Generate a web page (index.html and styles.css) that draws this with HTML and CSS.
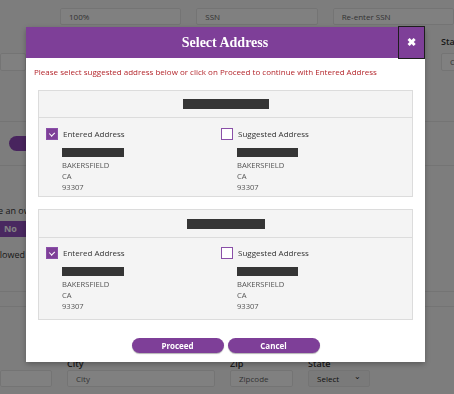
FILE: index.html
```html
<!DOCTYPE html>
<html lang="en">
<head>
<meta charset="utf-8"/>
<meta content="width=device-width, initial-scale=1.0" name="viewport"/>
<title>Owner Information</title>
<link rel="stylesheet" href="styles.css">
</head>
<body>
<div class="page">
    <div class="row top-row">
        <div class="field w140"><label>Ownership</label><div class="input">100%</div></div>
        <div class="field w140"><label>SSN</label><div class="input">SSN</div></div>
        <div class="field w140"><label>Re-enter SSN</label><div class="input">Re-enter SSN</div></div>
    </div>
    <div class="row second-row">
        <div class="field w26"><label>&nbsp;</label><div class="input tall"></div></div>
        <div class="field w60"><label>State</label><div class="input tall">CA</div></div>
    </div>
    <div class="rule rule-a"></div>
    <div class="verify-row">
        <span class="verify-btn">Verify Address</span>
    </div>
    <div class="rule rule-c"></div>
    <p class="question">Do you have an owner</p>
    <div class="toggle"><span class="toggle-no">No</span></div>
    <p class="question q2">Are you allowed to</p>
    <div class="rule rule-b"></div>
    <div class="rule"></div>

    <div class="row bottom-row">
        <div class="field w52"><label>&nbsp;</label><div class="input"></div></div>
        <div class="field w148"><label>City</label><div class="input">City</div></div>
        <div class="field w63"><label>Zip</label><div class="input">Zipcode</div></div>
        <div class="field w62"><label>State</label><div class="input select">Select <span class="chev">&#8964;</span></div></div>
    </div>
</div>

<!-- Address verification modal -->
<div class="backdrop">
    <div class="modal">
        <div class="modal-header">
            <h2>Select Address</h2>
            <button class="close-btn">&#10006;</button>
        </div>
        <div class="modal-body">
            <p class="notice">Please select suggested address below or click on Proceed to continue with Entered Address</p>

            <div class="panel">
                <div class="panel-head"><span class="redact w86"></span></div>
                <div class="panel-body">
                    <div class="choice">
                        <div class="choice-label"><span class="check checked"></span>Entered Address</div>
                        <div class="address">
                            <span class="redact w62"></span>
                            <div>BAKERSFIELD</div>
                            <div>CA</div>
                            <div>93307</div>
                        </div>
                    </div>
                    <div class="choice">
                        <div class="choice-label"><span class="check"></span>Suggested Address</div>
                        <div class="address">
                            <span class="redact w61"></span>
                            <div>BAKERSFIELD</div>
                            <div>CA</div>
                            <div>93307</div>
                        </div>
                    </div>
                </div>
            </div>

            <div class="panel second">
                <div class="panel-head"><span class="redact w78"></span></div>
                <div class="panel-body">
                    <div class="choice">
                        <div class="choice-label"><span class="check checked"></span>Entered Address</div>
                        <div class="address">
                            <span class="redact w62"></span>
                            <div>BAKERSFIELD</div>
                            <div>CA</div>
                            <div>93307</div>
                        </div>
                    </div>
                    <div class="choice">
                        <div class="choice-label"><span class="check"></span>Suggested Address</div>
                        <div class="address">
                            <span class="redact w61"></span>
                            <div>BAKERSFIELD</div>
                            <div>CA</div>
                            <div>93307</div>
                        </div>
                    </div>
                </div>
            </div>

            <div class="actions">
                <button class="pill">Proceed</button>
                <button class="pill">Cancel</button>
            </div>
        </div>
    </div>
</div>
</body>
</html>
```

FILE: styles.css
```css
html, body {
    margin: 0;
    height: 100%;
    overflow: hidden;
}
body {
    font-family: "Open Sans", sans-serif;
    background: #f6f6f6;
    color: #333;
}

/* Page behind the modal */
.page {
    height: 100%;
    display: flex;
    flex-direction: column;
}
.row {
    display: flex;
    gap: 15px;
}
.top-row {
    margin-top: -11px;
    padding-left: 60px;
}
.second-row {
    margin-top: 11px;
    justify-content: space-between;
    margin-right: -47px;
}
.field label {
    display: block;
    height: 11px;
    margin-bottom: 6px;
    font-size: 9px;
    font-weight: 600;
    line-height: 11px;
    white-space: nowrap;
    overflow: hidden;
}
.top-row .field label {
    margin-bottom: 8px;
}
.input {
    height: 15px;
    border: 1px solid #e4e4e4;
    background: #fcfcfc;
    border-radius: 2px;
    font-size: 8px;
    line-height: 15px;
    padding: 0 8px;
    color: #666;
    white-space: nowrap;
}
.input.tall {
    height: 16px;
    line-height: 16px;
}
.select {
    display: flex;
    justify-content: space-between;
    color: #222;
    background: #f0f0f0;
}
.chev {
    font-size: 8px;
    line-height: 10px;
}
.w26 { width: 26px; }
.w52 { width: 52px; }
.w60 { width: 60px; }
.w62 { width: 62px; }
.w63 { width: 63px; }
.w140 { width: 140px; }
.w148 { width: 148px; }
.w26 .input, .w52 .input { padding: 0; }

.rule {
    border-top: 1px solid #e4e4e4;
    margin-top: 14px;
}
.rule-a { margin-top: 50px; }
.verify-row {
    margin-top: 14px;
    padding-left: 9px;
}
.verify-btn {
    display: block;
    width: 120px;
    height: 15px;
    border-radius: 8px;
    background: #8e48b8;
    color: #fff;
    font-size: 8px;
    line-height: 15px;
    text-align: center;
}
.rule-c { margin-top: 14px; }
.question {
    margin: 39px 0 0 -49px;
    font-size: 9px;
    line-height: 12px;
    white-space: nowrap;
}
.q2 {
    margin: 12px 0 0 -42px;
}
.toggle {
    margin-top: 4px;
    width: 60px;
    height: 16px;
    background: #8f4fbd;
}
.toggle-no {
    display: block;
    padding-left: 4px;
    color: #fff;
    font-size: 9px;
    font-weight: 700;
    line-height: 16px;
}
.rule-b { margin-top: 30px; }
.bottom-row {
    margin-top: auto;
    padding-bottom: 7px;
}
.bottom-row .field label {
    height: 12px;
    margin-bottom: 0;
}

/* Modal */
.backdrop {
    position: fixed;
    inset: 0;
    background: rgba(0, 0, 0, 0.49);
    display: flex;
    justify-content: center;
    align-items: flex-start;
    padding-top: 27px;
    padding-right: 3px;
}
.modal {
    width: 399px;
    background: #fff;
    box-shadow: 0 2px 6px rgba(0, 0, 0, 0.3);
}
.modal-header {
    height: 31px;
    background: #7e3f98;
    display: flex;
    align-items: flex-start;
}
.modal-header h2 {
    flex: 1;
    margin: 0;
    padding-left: 26px;
    text-align: center;
    font-family: "Liberation Serif", serif;
    font-size: 14px;
    font-weight: 700;
    line-height: 31px;
    color: #fff;
}
.close-btn {
    width: 27px;
    height: 33px;
    margin-top: -1px;
    border: 1px solid #1e1e1e;
    background: #7e3f98;
    color: #fff;
    font-size: 11px;
    font-weight: 700;
    padding: 0;
    line-height: 31px;
}
.modal-body {
    padding: 0 12px 9px;
}
.notice {
    margin: 0 0 0 -4px;
    padding-top: 8px;
    font-size: 8px;
    line-height: 12px;
    color: #b4262c;
    white-space: nowrap;
}
.panel {
    margin-top: 12px;
    background: #f4f4f4;
    border: 1px solid #dcdcdc;
}
.panel-head {
    height: 26px;
    border-bottom: 1px solid #dcdcdc;
    display: flex;
    justify-content: center;
    align-items: center;
}
.second .panel-head {
    height: 27px;
}
.redact {
    display: block;
    height: 10px;
    background: #353535;
}
.w86 { width: 86px; }
.w78 { width: 78px; }
.w61 { width: 61px; }
.panel-body {
    display: grid;
    grid-template-columns: 175px 1fr;
    padding: 10px 7px 3px;
}
.second .panel-body {
    padding: 9px 7px 7px;
}
.choice-label {
    display: flex;
    align-items: center;
    gap: 5px;
    font-size: 8px;
    line-height: 12px;
    color: #333;
}
.check {
    width: 10px;
    height: 10px;
    border: 1px solid #8a4fa8;
    background: #fff;
    position: relative;
}
.check.checked {
    background: #7e3f98;
}
.check.checked::after {
    content: "";
    position: absolute;
    left: 3px;
    top: 2px;
    width: 3px;
    height: 4px;
    border: solid #fff;
    border-width: 0 1.5px 1.5px 0;
    transform: rotate(45deg);
}
.address {
    padding-left: 16px;
    margin-top: 8px;
    font-size: 7.6px;
    line-height: 11px;
    color: #555;
}
.address .redact {
    height: 9px;
    margin-bottom: 3px;
}
.actions {
    display: flex;
    justify-content: center;
    gap: 4px;
    margin-top: 18px;
}
.pill {
    width: 92px;
    height: 15px;
    border: none;
    border-radius: 8px;
    background: #7e3f98;
    color: #fff;
    font-family: "Open Sans", sans-serif;
    font-size: 8px;
    font-weight: 700;
    padding: 0;
    box-shadow: 0 1px 1px rgba(0, 0, 0, 0.3);
}
```
